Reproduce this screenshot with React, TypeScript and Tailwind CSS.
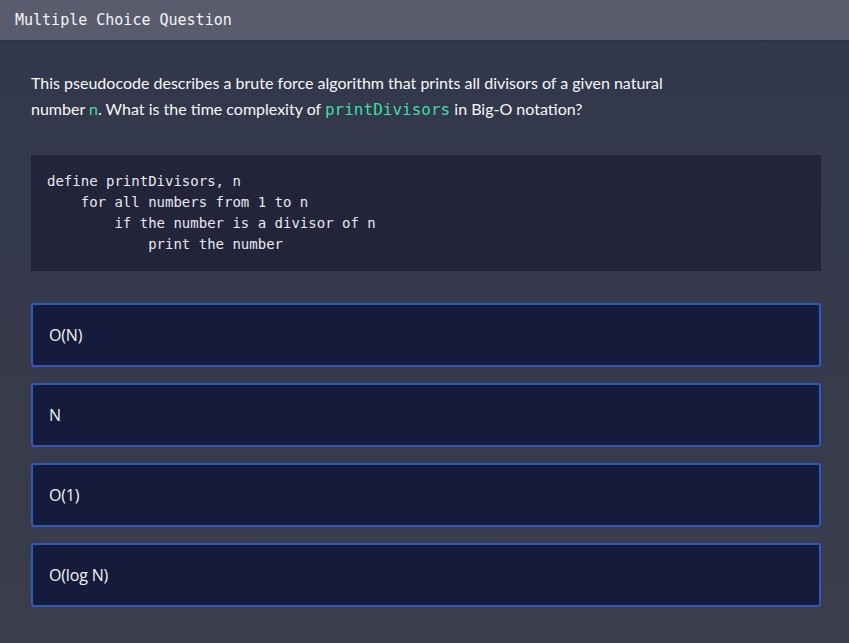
const options = ["O(N)", "N", "O(1)", "O(log N)"];

const code = [
    "define printDivisors, n",
    "    for all numbers from 1 to n",
    "        if the number is a divisor of n",
    "            print the number",
];

export default function App() {
    return (
        <div className="min-h-[643px] flex flex-col bg-gradient-to-b from-[#31374b] to-[#3b3d4c]">
            {/* Header bar */}
            <div className="h-10 bg-[#5a5c6e] flex items-center px-[15px] shadow-[0_1px_0_#2c3043]">
                <span className="font-['DejaVu_Sans_Mono',monospace] text-[15px] font-medium text-[#f4f4f6]">
                    Multiple Choice Question
                </span>
            </div>

            <div className="pl-[31px] pr-[28px] pt-[30px] pb-9">
                {/* Question */}
                <p className="font-['Lato',sans-serif] text-[16px] leading-[26px] text-[#f7f7f8] max-w-[660px]">
                    This pseudocode describes a brute force algorithm that prints all divisors of a given natural number{" "}
                    <span className="text-[#3fdca4]">n</span>. What is the time complexity of{" "}
                    <code className="font-['DejaVu_Sans_Mono',monospace] text-[16px] text-[#3fdca4]">printDivisors</code>{" "}
                    in Big-O notation?
                </p>

                {/* Code block */}
                <pre className="mt-8 bg-[#23233a] px-4 py-4 font-['DejaVu_Sans_Mono',monospace] text-[14px] leading-[21px] text-[#e8e8ee]">
                    {code.join("\n")}
                </pre>

                {/* Options */}
                <div className="mt-8 flex flex-col gap-4">
                    {options.map((opt) => (
                        <div
                            key={opt}
                            className="h-16 flex items-center px-4 bg-[#151b3a] border-2 border-[#2d58bd] rounded-[3px] font-['Open_Sans',sans-serif] text-[16px] font-medium text-[#f3f3f6] tracking-[-0.01em]"
                        >
                            {opt}
                        </div>
                    ))}
                </div>
            </div>
        </div>
    );
}
